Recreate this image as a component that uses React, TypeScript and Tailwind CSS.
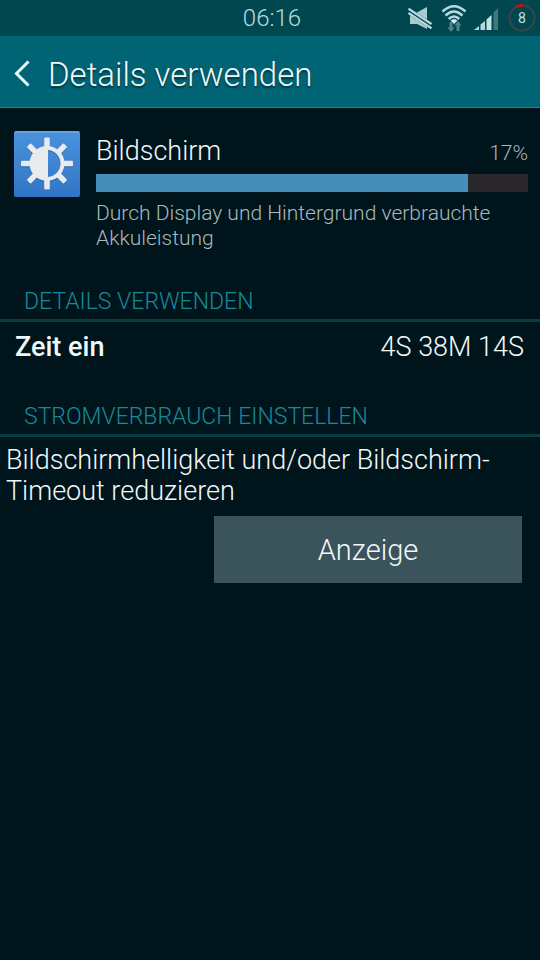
import type { ReactNode } from "react";

const usage = {
  name: "Bildschirm",
  percent: 17,
  // share of the bar, relative to the largest consumer
  barWidth: 86,
  description: "Durch Display und Hintergrund verbrauchte Akkuleistung",
};

const details = [{ label: "Zeit ein", value: "4S 38M 14S" }];

const RAY_ANGLES = [0, 45, 90, 135, 180, 225, 270, 315];

function MuteIcon() {
  return (
    <svg className="mr-0.5 h-6 w-6" viewBox="0 0 24 24" aria-hidden="true">
      <path d="M2 7h6l11-6v22L9 18H2z" fill="#a9cbd0" />
      <path d="M0 4.5 24 20.5" stroke="#00474f" strokeWidth="6" />
      <path d="M.5 2.700 23.500 18M.5 7 23.500 22.300" stroke="#b9dade" strokeWidth="2.200" />
    </svg>
  );
}

function WifiIcon() {
  return (
    <svg className="h-7 w-7" viewBox="0 0 28 28" fill="none" aria-hidden="true">
      <g stroke="#b5dbe0" strokeWidth="2.600">
        <path d="M2.500 7.500Q14-3 25.500 7.500" />
        <path d="M5.500 11.500Q14 3.500 22.500 11.500" />
        <path d="M8.700 15Q14 10 19.300 15" />
      </g>
      <path d="M10.500 16.500Q14 13.500 17.500 16.500L14 20z" fill="#d3edf0" />
      <path
        d="M9.500 18h3v5.500h2L11 28l-3.500-4.500h2zM16.500 27v-5.500h-2L18 17l3.500 4.500h-2V27z"
        fill="#4b858c"
      />
    </svg>
  );
}

function SignalIcon() {
  return (
    <svg className="h-6 w-6" viewBox="0 0 24 24" aria-hidden="true">
      <path d="M0 24l5-4v4z" fill="#b5d6da" />
      <path d="M6.500 18.500l4.500-3.500v9H6.500z" fill="#b5d6da" />
      <path d="M12.500 13.500l5-4.500V24h-5z" fill="#c3e0e3" />
      <path d="M19.500 6.500l4.500-4.500v22h-4.500z" fill="#41777e" />
    </svg>
  );
}

function BatteryRing() {
  return (
    <svg className="h-7 w-7" viewBox="0 0 28 28" fill="none" aria-hidden="true">
      <circle cx="14" cy="14" r="12.500" stroke="#3a4548" strokeWidth="2" />
      <path d="M8 3A12.500 12.500 0 0 1 15 1.500" stroke="#c01414" strokeWidth="3" />
    </svg>
  );
}

function BrightnessIcon() {
  return (
    <svg className="h-[66px] w-[66px] shrink-0" viewBox="0 0 66 66" aria-hidden="true">
      <defs>
        <linearGradient id="tile" x1="0" y1="0" x2="0" y2="1">
          <stop offset="0" stopColor="#4b92dc" />
          <stop offset="1" stopColor="#3176c6" />
        </linearGradient>
      </defs>
      <rect width="66" height="66" rx="2" fill="url(#tile)" />
      <path d="M1 1h64" stroke="#6fa9e2" strokeWidth="1.500" />
      {["#2a66ae", "#e8eaec"].map((color, i) => (
        <g key={color} transform={i === 0 ? "translate(0 1)" : undefined}>
          {RAY_ANGLES.map((angle) => (
            <rect
              key={angle}
              x="30.200"
              y="6.500"
              width="5.600"
              height="11"
              rx="1"
              fill={color}
              transform={`rotate(${angle} 33 32.500)`}
            />
          ))}
          <circle cx="33" cy="32.500" r="15.500" fill="none" stroke={color} strokeWidth="4" />
          <path d="M34 17h-1a15.500 15.500 0 0 0 0 31h1z" fill={color} />
        </g>
      ))}
    </svg>
  );
}

function SectionTitle({ children }: { children: ReactNode }) {
  return (
    <h2 className="border-b-3 border-[#073c43] px-6 pb-0.5 text-[23px] leading-[30px] text-[#158a99]">
      {children}
    </h2>
  );
}

export default function App() {
  return (
    <div className="min-h-screen bg-[#00141b] font-['Roboto','Noto_Sans',sans-serif] font-light text-[#f0f9fa]">
      <div className="grid h-9 grid-cols-[1fr_auto_1fr] items-center bg-[#00474f]">
        <time className="col-start-2 pl-1 text-2xl text-[#b4dce0]">06:16</time>
        <div className="flex items-center justify-end gap-1.5 pr-1">
          <MuteIcon />
          <WifiIcon />
          <SignalIcon />
          <div className="relative ml-1">
            <BatteryRing />
            <span className="absolute inset-0 flex items-center justify-center text-sm font-normal text-[#c9e2e5]">
              8
            </span>
          </div>
        </div>
      </div>

      <header className="flex h-[72px] items-center gap-4 border-b border-[#2b7f8a] bg-[#006475] px-3 pt-1">
        <button type="button" aria-label="Zurück" className="flex h-12 w-5 items-center">
          <svg className="h-7 w-5" viewBox="0 0 20 28" fill="none" aria-hidden="true">
            <path d="M16.500 1.500 4.500 13.500 16.500 25.500" stroke="#e9fafc" strokeWidth="3" />
          </svg>
        </button>
        <h1 className="pt-0.5 text-[33px] leading-10 text-shadow-[0_2px_2px_#00343d]">
          Details verwenden
        </h1>
      </header>

      <main>
        <section className="flex gap-4 pt-[23px] pr-3 pl-[14px]">
          <BrightnessIcon />
          <div className="min-w-0 flex-1">
            <div className="flex items-end justify-between">
              <h2 className="text-[27px] leading-10">{usage.name}</h2>
              <span className="text-[21px] leading-9 text-[#a9b8bc]">{usage.percent}%</span>
            </div>
            <div className="mt-[3px] h-[18px] bg-[#29262c]">
              <div className="h-full bg-[#468db8]" style={{ width: `${usage.barWidth}%` }} />
            </div>
            <p className="mt-[9px] text-[21px] leading-[25px] text-[#a9b9bd]">
              {usage.description}
            </p>
          </div>
        </section>

        <section className="mt-9">
          <SectionTitle>DETAILS VERWENDEN</SectionTitle>
          <dl>
            {details.map((item) => (
              <div
                key={item.label}
                className="flex items-center justify-between pt-[7px] pr-4 pb-[9px] pl-[15px] text-[27px] leading-9"
              >
                <dt className="font-medium">{item.label}</dt>
                <dd>{item.value}</dd>
              </div>
            ))}
          </dl>
        </section>

        <section className="mt-7">
          <SectionTitle>STROMVERBRAUCH EINSTELLEN</SectionTitle>
          <p className="px-1.5 pt-2 text-[27px] leading-[31px]">
            Bildschirmhelligkeit und/oder Bildschirm-Timeout reduzieren
          </p>
          <div className="mt-[9px] flex justify-end pr-[18px]">
            <button
              type="button"
              className="h-[67px] w-3/5 max-w-[308px] bg-[#3b535a] pt-0.5 text-[29px]"
            >
              Anzeige
            </button>
          </div>
        </section>
      </main>
    </div>
  );
}
